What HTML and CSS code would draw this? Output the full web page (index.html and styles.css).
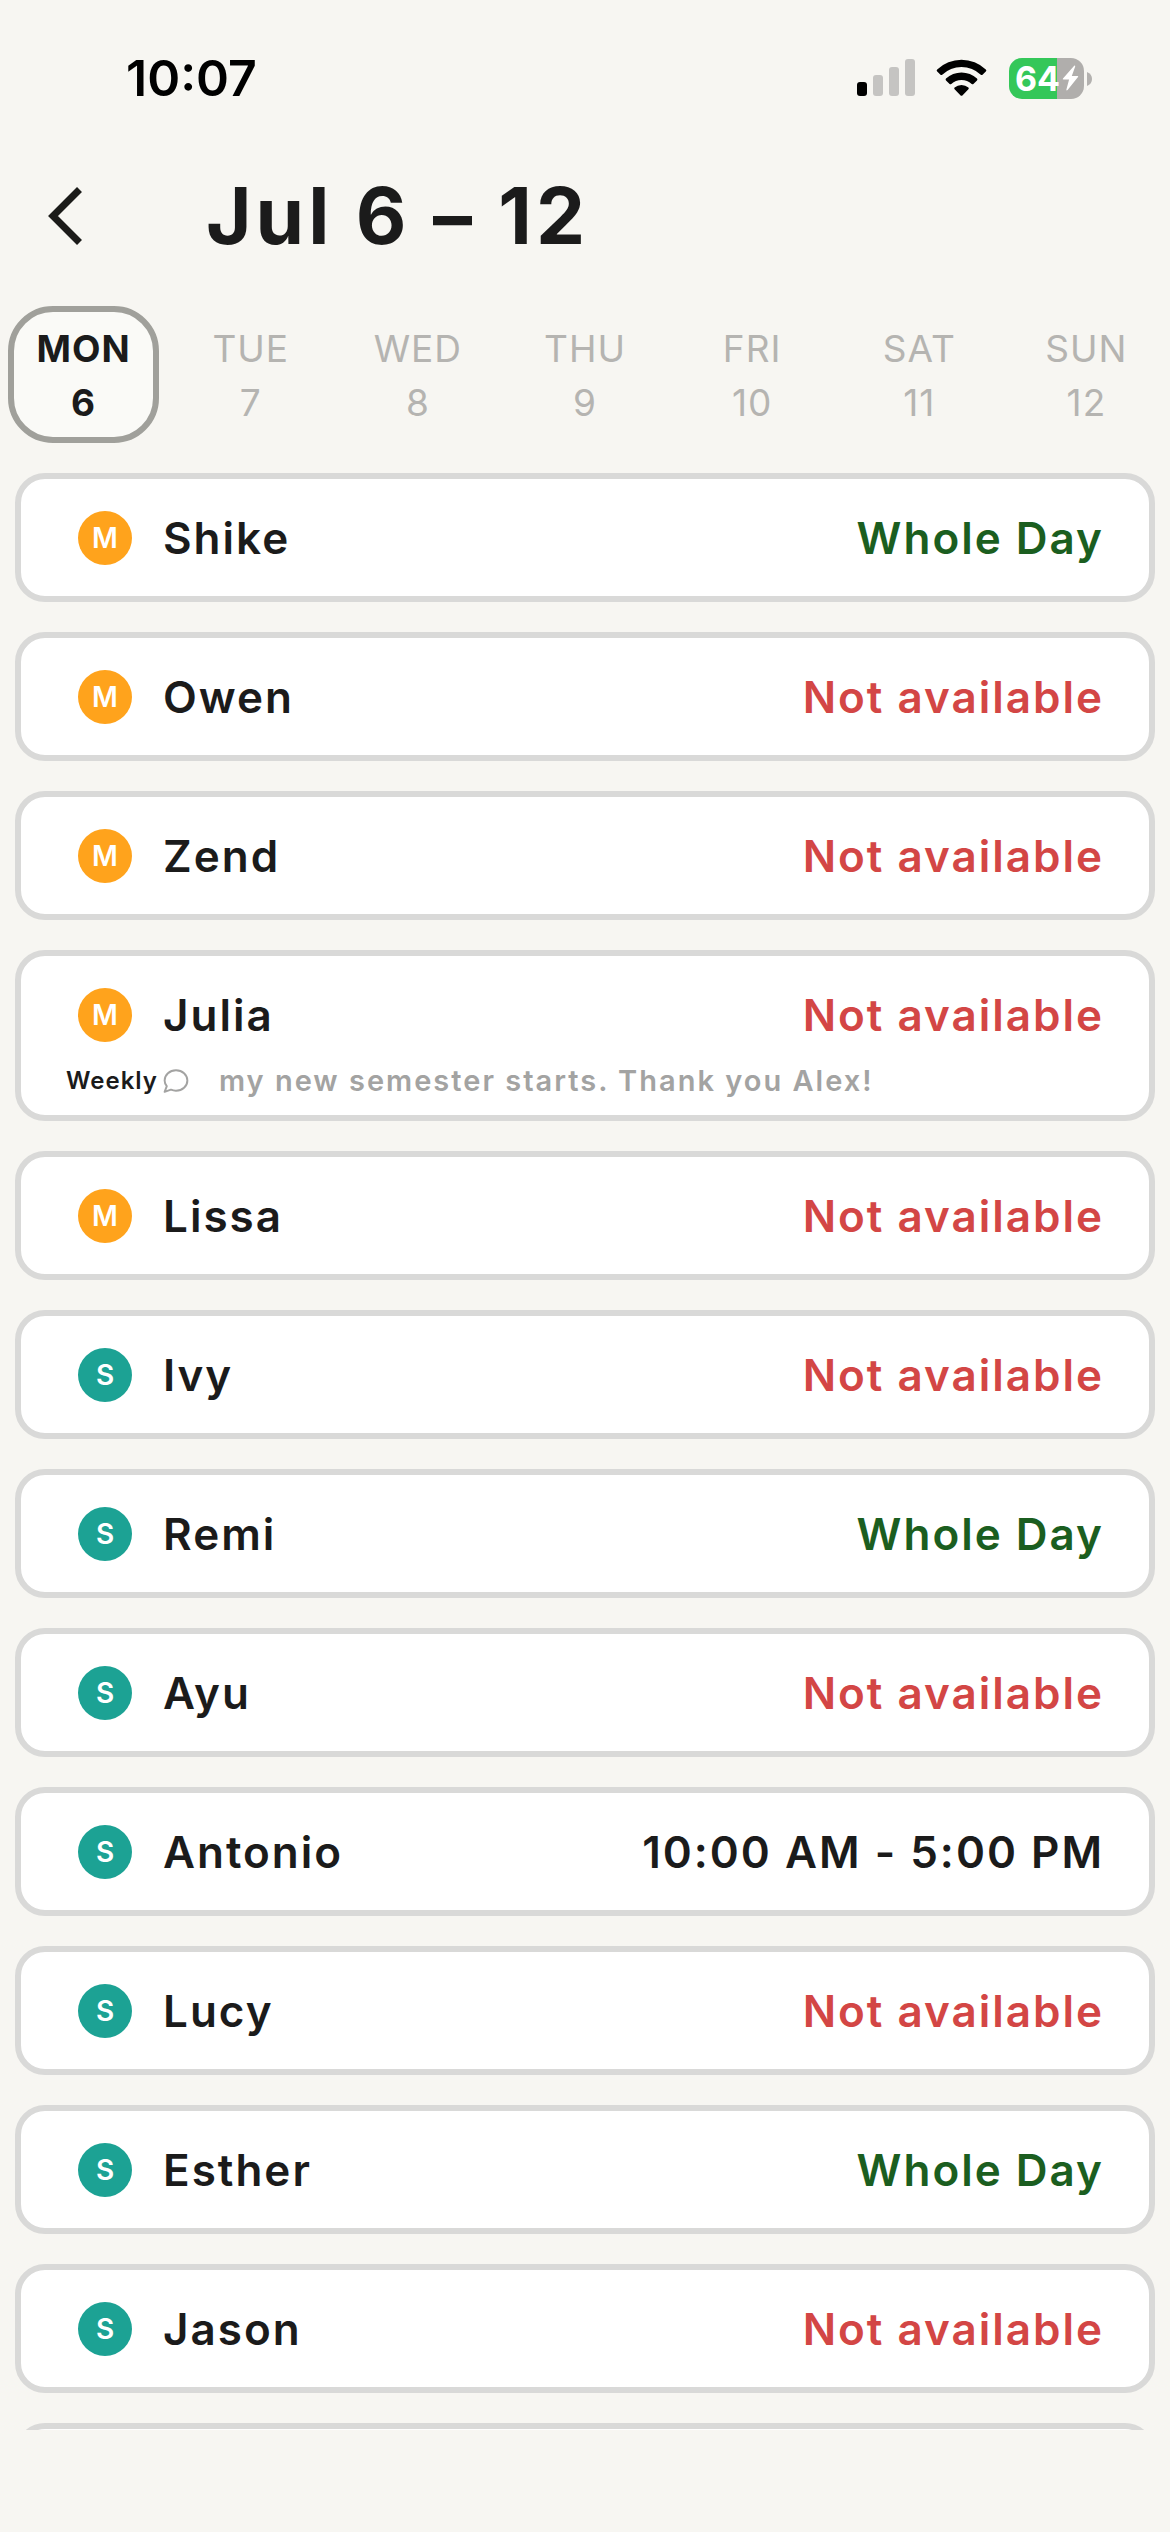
FILE: index.html
```html
<!DOCTYPE html>
<html lang="en">
<head>
<meta charset="utf-8">
<meta name="viewport" content="width=device-width, initial-scale=1">
<title>Availability</title>
<link rel="stylesheet" href="styles.css">
</head>
<body>
<div class="screen">
  <div class="status">
    <time class="clock">10:07</time>
    <div class="indicators">
      <svg class="signal" width="58" height="38" viewBox="0 0 58 38" role="img" aria-label="Signal">
        <rect x="0" y="23" width="10" height="14" rx="3" fill="#000"/>
        <g fill="#c5c4c2"><rect x="16" y="16" width="10" height="21" rx="3"/><rect x="32" y="8" width="10" height="29" rx="3"/><rect x="48" y="0" width="10" height="37" rx="3"/></g>
      </svg>
      <svg class="wifi" width="52" height="38" viewBox="0 0 52 38" role="img" aria-label="Wi-Fi">
        <path d="M1.2 10.4a35.3 35.3 0 0 1 48.6 0q1 1 0 2l-3.3 3.3q-.8.8-1.7 0a28 28 0 0 0-38.6 0q-.9.8-1.7 0L1.2 12.4q-1-1 0-2z"/>
        <path d="M10 19.6a22.6 22.6 0 0 1 31 0q.9.9 0 1.8l-3.6 3.5q-.8.8-1.7 0a15 15 0 0 0-20.4 0q-.9.8-1.7 0L10 21.4q-.9-.9 0-1.8z"/>
        <path d="M18.6 28.6a10.3 10.3 0 0 1 13.8 0q.9.8 0 1.7l-6 6.1q-.9.9-1.8 0l-6-6.1q-.9-.9 0-1.7z"/>
      </svg>
      <div class="battery"><span class="level">64</span>
        <svg class="bolt" width="17" height="26" viewBox="0 0 17 26" aria-hidden="true"><path d="M12.2.8 1 13.6q-.8 1 .5 1h5.6L4.4 24.4q-.1 1.6 1.2.6L16 12q.8-1-.5-1H9.8L13.2 1.6Q13.3 0 12.2.8z" fill="#fff"/></svg>
        <svg class="nub" width="5" height="14" viewBox="0 0 5 14" aria-hidden="true"><path d="M0 0q5 2 5 7t-5 7z" fill="#b3b1af"/></svg>
      </div>
    </div>
  </div>

  <header class="header">
    <button class="back" aria-label="Back"><svg width="36" height="60" viewBox="0 0 36 60" fill="none" stroke="#1b1b19" stroke-width="7"><path d="M31.5 3.5 5 30l26.5 26.5"/></svg></button>
    <h1 class="title">Jul 6 – 12</h1>
  </header>

  <nav class="days" aria-label="Days">
    <button class="day day-active" aria-current="date"><span>MON</span><span>6</span></button>
    <button class="day"><span>TUE</span><span>7</span></button>
    <button class="day"><span>WED</span><span>8</span></button>
    <button class="day"><span>THU</span><span>9</span></button>
    <button class="day"><span>FRI</span><span>10</span></button>
    <button class="day"><span>SAT</span><span>11</span></button>
    <button class="day"><span>SUN</span><span>12</span></button>
  </nav>

  <main class="list">
    <article class="card"><div class="row"><span class="avatar manager">M</span><h2 class="name">Shike</h2><span class="slot whole">Whole Day</span></div></article>
    <article class="card"><div class="row"><span class="avatar manager">M</span><h2 class="name">Owen</h2><span class="slot off">Not available</span></div></article>
    <article class="card"><div class="row"><span class="avatar manager">M</span><h2 class="name">Zend</h2><span class="slot off">Not available</span></div></article>
    <article class="card"><div class="row"><span class="avatar manager">M</span><h2 class="name">Julia</h2><span class="slot off">Not available</span></div>
      <div class="note"><span class="repeat">Weekly</span><svg class="bubble" width="26" height="26" viewBox="0 0 24 24" fill="none" stroke="#a3a3a2" stroke-width="1.8" stroke-linejoin="round"><path d="M12 2C17.8 2 22.5 6.2 22.5 11.5S17.8 21 12 21c-1.700 0-3.300-.4-4.700-1L1.500 22l2-5.200C2.200 15.300 1.500 13.500 1.500 11.500 1.500 6.200 6.200 2 12 2z"/></svg><p class="comment">my new semester starts. Thank you Alex!</p></div></article>
    <article class="card"><div class="row"><span class="avatar manager">M</span><h2 class="name">Lissa</h2><span class="slot off">Not available</span></div></article>
    <article class="card"><div class="row"><span class="avatar staff">S</span><h2 class="name">Ivy</h2><span class="slot off">Not available</span></div></article>
    <article class="card"><div class="row"><span class="avatar staff">S</span><h2 class="name">Remi</h2><span class="slot whole">Whole Day</span></div></article>
    <article class="card"><div class="row"><span class="avatar staff">S</span><h2 class="name">Ayu</h2><span class="slot off">Not available</span></div></article>
    <article class="card"><div class="row"><span class="avatar staff">S</span><h2 class="name">Antonio</h2><span class="slot">10:00 AM - 5:00 PM</span></div></article>
    <article class="card"><div class="row"><span class="avatar staff">S</span><h2 class="name">Lucy</h2><span class="slot off">Not available</span></div></article>
    <article class="card"><div class="row"><span class="avatar staff">S</span><h2 class="name">Esther</h2><span class="slot whole">Whole Day</span></div></article>
    <article class="card"><div class="row"><span class="avatar staff">S</span><h2 class="name">Jason</h2><span class="slot off">Not available</span></div></article>
    <article class="card" aria-hidden="true"><div class="row"></div></article>
  </main>
</div>
</body>
</html>
```
FILE: styles.css
```css
* { box-sizing: border-box; margin: 0; }
body {
  background: #f7f6f2;
  color: #1b1b1b;
  font-family: Inter, "Liberation Sans", sans-serif;
}
button {
  padding: 0;
  border: 0;
  background: none;
  color: inherit;
  font: inherit;
}
svg { display: block; flex: none; }

.screen {
  display: flex;
  flex-direction: column;
  height: 100vh;
  padding-bottom: 102px;
}

.status {
  display: flex;
  flex: none;
  align-items: center;
  justify-content: space-between;
  height: 156px;
  padding: 0 86px 0 126px;
  color: #000;
}
.clock { font-size: 50px; font-weight: 600; line-height: 60px; }
.indicators { display: flex; align-items: center; gap: 21px; }
.battery {
  position: relative;
  display: flex;
  align-items: center;
  gap: 2px;
  width: 75px;
  height: 41px;
  padding-left: 6px;
  border-radius: 13px;
  background: linear-gradient(to right, #34c759 64%, #b0aeac 64%);
}
.level { color: #fff; font-size: 34px; font-weight: 700; line-height: 41px; }
.nub { position: absolute; left: 78px; top: 14px; }

.header {
  display: flex;
  flex: none;
  align-items: center;
  gap: 122px;
  height: 120px;
  padding-left: 48px;
}
.title { font-size: 78px; font-weight: 700; letter-spacing: 4px; line-height: 96px; }

.days {
  display: grid;
  flex: none;
  grid-template-columns: repeat(7, 1fr);
  margin-top: 30px;
}
.day {
  display: flex;
  flex-direction: column;
  align-items: center;
  margin: 0 8px;
  padding: 10px 0 7px;
  border: 6px solid transparent;
  border-radius: 45px;
  color: #b5b4b1;
  font-size: 37px;
  letter-spacing: 1px;
  line-height: 54px;
}
.day-active {
  border-color: #a0a09b;
  background: #fafaf7;
  color: #1b1b1b;
  font-weight: 700;
}

.list {
  display: flex;
  flex: 1;
  flex-direction: column;
  gap: 30px;
  min-height: 0;
  margin-top: 30px;
  padding: 0 15px;
  overflow: hidden;
}
.card {
  flex: none;
  padding: 20px 45px 20px 57px;
  border: 6px solid #d9d9d8;
  border-radius: 30px;
  background: #fff;
}
.row { display: flex; align-items: center; height: 77px; }
.avatar {
  width: 54px;
  border-radius: 50%;
  color: #fff;
  font-size: 28px;
  font-weight: 600;
  line-height: 54px;
  text-align: center;
}
.manager { background: #ffa31c; }
.staff { background: #1ca294; }
.name, .slot {
  font-size: 44px;
  font-weight: 600;
  letter-spacing: 2px;
  line-height: 54px;
}
.name { margin-left: 31px; }
.slot { margin-left: auto; }
.whole { color: #1b5e20; }
.off { color: #d34645; }

.note {
  display: flex;
  align-items: center;
  margin-left: -12px;
  padding-top: 14px;
  line-height: 28px;
}
.repeat { font-size: 24px; font-weight: 600; letter-spacing: 1px; }
.bubble { margin: 0 30px 0 5px; }
.comment { color: #a3a3a2; font-size: 29px; font-weight: 600; letter-spacing: 2px; }
```
